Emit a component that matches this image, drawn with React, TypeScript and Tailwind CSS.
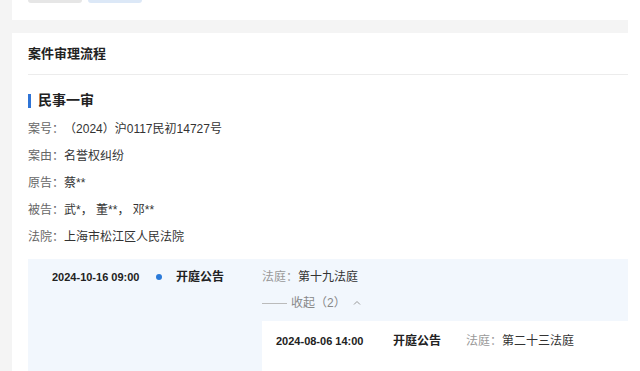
const font = "font-['Liberation_Sans','Noto_Sans_CJK_SC',sans-serif]";

function InfoRow({ label, value }: { label: string; value: React.ReactNode }) {
  return (
    <div className="flex h-[27px] items-center text-[12px]">
      <span className="text-[#666]">{label}：</span>
      <span className="text-[#333]">{value}</span>
    </div>
  );
}

export default function App() {
  return (
    <div className={`flex min-h-screen w-[640px] bg-white ${font}`}>
      <div className="w-[12px] shrink-0 bg-[#f4f4f4]" />
      <div className="w-[616px] shrink-0 bg-[#f4f4f4]">
        <div className="h-[20px] bg-white pl-[16px]">
          <div className="flex gap-[6px]">
            <div className="h-[3px] w-[54px] rounded-b-sm bg-[#e6e6e6]" />
            <div className="h-[3px] w-[54px] rounded-b-sm bg-[#dce8f7]" />
          </div>
        </div>
        <div className="mt-[13px] h-[338px] overflow-hidden bg-white pl-[16px]">
          <div className="flex h-[42px] items-center border-b border-[#ececec] text-[13px] font-bold text-[#222]">
            案件审理流程
          </div>
          <div className="mt-[15px] flex items-center gap-[7px]">
            <div className="h-[14px] w-[3px] bg-[#2f74d6]" />
            <span className="text-[14px] font-bold text-[#222]">民事一审</span>
          </div>
          <div className="mt-[4px]">
            <InfoRow label="案号" value="（2024）沪0117民初14727号" />
            <InfoRow label="案由" value="名誉权纠纷" />
            <InfoRow label="原告" value="蔡**" />
            <InfoRow label="被告" value="武*， 董**， 邓**" />
            <InfoRow label="法院" value="上海市松江区人民法院" />
          </div>
          <div className="mt-[9px] h-[200px] bg-[#f2f7fd]">
            <div className="flex h-[34px] items-center pt-[2px] text-[12px]">
              <span className="w-[128px] whitespace-nowrap pl-[24px] text-[11px] font-bold text-[#222]">2024-10-16 09:00</span>
              <span className="h-[6px] w-[6px] shrink-0 rounded-full bg-[#2a7ad9]" />
              <span className="ml-[14px] w-[86px] font-bold text-[#222]">开庭公告</span>
              <span className="text-[#999]">法庭：</span>
              <span className="text-[#333]">第十九法庭</span>
            </div>
            <div className="ml-[234px] flex h-[20px] items-center gap-[4px] text-[12px] text-[#888]">
              <div className="h-px w-[25px] bg-[#bbb]" />
              <span>收起（2）</span>
              <svg width="10" height="10" viewBox="0 0 10 10" className="ml-[2px]">
                <path d="M2 6.5 L5 3.5 L8 6.5" fill="none" stroke="#999" strokeWidth="1" />
              </svg>
            </div>
            <div className="ml-[234px] mt-[8px] h-[140px] bg-white pt-[10px]">
              <div className="flex h-[20px] items-center text-[12px]">
                <span className="w-[131px] whitespace-nowrap pl-[14px] text-[11px] font-bold text-[#222]">2024-08-06 14:00</span>
                <span className="w-[73px] font-bold text-[#222]">开庭公告</span>
                <span className="text-[#999]">法庭：</span>
                <span className="text-[#333]">第二十三法庭</span>
              </div>
            </div>
          </div>
        </div>
      </div>
    </div>
  );
}
